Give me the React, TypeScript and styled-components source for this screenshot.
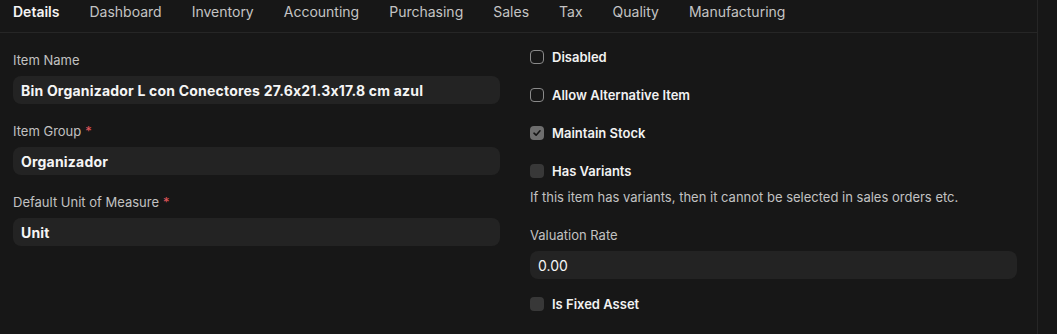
import React from "react";
import styled, { createGlobalStyle } from "styled-components";

const Global = createGlobalStyle`
  html, body { margin: 0; padding: 0; background: #171717; }
  body { font-family: Inter, "Noto Sans", sans-serif; color: #e8e8e8; font-feature-settings: "calt" 0; }
  * { box-sizing: border-box; }
`;

const Page = styled.div`
  width: 1057px;
  height: 334px;
  background: #171717;
  overflow: hidden;
`;

const Main = styled.div`
  width: 1038px;
  height: 334px;
  border-right: 1px solid #262626;
`;

const TabBar = styled.nav`
  display: flex;
  height: 33px;
  padding-left: 13px;
  border-bottom: 1px solid #262626;
  gap: 30px;
`;

const Tab = styled.div<{ $active?: boolean }>`
  font-size: 14px;
  line-height: 24px;
  font-weight: ${(p) => (p.$active ? 600 : 400)};
  color: ${(p) => (p.$active ? "#f5f5f5" : "#c4c4c4")};
`;

const Body = styled.div`
  display: grid;
  grid-template-columns: 487px 487px;
  column-gap: 30px;
  padding-left: 13px;
`;

const Column = styled.div<{ $top: number }>`
  display: flex;
  flex-direction: column;
  padding-top: ${(p) => p.$top}px;
`;

const Field = styled.div<{ $mb?: number }>`
  display: flex;
  flex-direction: column;
  gap: 7px;
  margin-bottom: ${(p) => p.$mb ?? 18}px;
`;

const Label = styled.label`
  font-size: 13px;
  line-height: 18px;
  color: #c2c2c2;
`;

const Req = styled.span`
  color: #e0565b;
  margin-left: 4px;
`;

const Input = styled.div<{ $bold?: boolean }>`
  height: 28px;
  border-radius: 8px;
  background: #232323;
  padding: 0 8px;
  display: flex;
  align-items: center;
  font-size: 14px;
  font-weight: ${(p) => (p.$bold ? 700 : 400)};
  letter-spacing: ${(p) => (p.$bold ? "0.2px" : "0")};
  color: #f5f5f5;
`;

const CheckRow = styled.div<{ $mb?: number }>`
  display: flex;
  align-items: center;
  gap: 8px;
  height: 20px;
  margin-bottom: ${(p) => p.$mb ?? 18}px;
`;

const Box = styled.span<{ $state: "off" | "on" | "disabled" }>`
  width: 14px;
  height: 14px;
  border-radius: 4px;
  display: inline-flex;
  align-items: center;
  justify-content: center;
  flex: none;
  background: ${(p) =>
    p.$state === "on" ? "#6e6e6e" : p.$state === "disabled" ? "#383838" : "transparent"};
  border: ${(p) => (p.$state === "off" ? "1px solid #8a8a8a" : "none")};
`;

const CheckLabel = styled.span`
  font-size: 13px;
  font-weight: 600;
  color: #f2f2f2;
`;

const Desc = styled.div`
  font-size: 13px;
  line-height: 18px;
  color: #c2c2c2;
  margin-bottom: 20px;
`;

const Check = ({ label, state, mb }: { label: string; state: "off" | "on" | "disabled"; mb?: number }) => (
  <CheckRow $mb={mb}>
    <Box $state={state}>
      {state === "on" && (
        <svg width="10" height="10" viewBox="0 0 10 10">
          <path d="M2 5.2 L4.1 7.2 L8 2.8" stroke="#141414" strokeWidth="1.6" fill="none" strokeLinecap="round" strokeLinejoin="round" />
        </svg>
      )}
    </Box>
    <CheckLabel>{label}</CheckLabel>
  </CheckRow>
);

const tabs = ["Details", "Dashboard", "Inventory", "Accounting", "Purchasing", "Sales", "Tax", "Quality", "Manufacturing"];

export default function App() {
  return (
    <Page>
      <Global />
      <Main>
        <TabBar>
          {tabs.map((t, i) => (
            <Tab key={t} $active={i === 0}>{t}</Tab>
          ))}
        </TabBar>
        <Body>
          <Column $top={18}>
            <Field>
              <Label>Item Name</Label>
              <Input $bold>Bin Organizador L con Conectores 27.6x21.3x17.8 cm azul</Input>
            </Field>
            <Field>
              <Label>Item Group<Req>*</Req></Label>
              <Input $bold>Organizador</Input>
            </Field>
            <Field>
              <Label>Default Unit of Measure<Req>*</Req></Label>
              <Input $bold>Unit</Input>
            </Field>
          </Column>
          <Column $top={14}>
            <Check label="Disabled" state="off" />
            <Check label="Allow Alternative Item" state="off" />
            <Check label="Maintain Stock" state="on" />
            <Check label="Has Variants" state="disabled" mb={7} />
            <Desc>If this item has variants, then it cannot be selected in sales orders etc.</Desc>
            <Field $mb={15}>
              <Label>Valuation Rate</Label>
              <Input>0.00</Input>
            </Field>
            <Check label="Is Fixed Asset" state="disabled" />
          </Column>
        </Body>
      </Main>
    </Page>
  );
}
